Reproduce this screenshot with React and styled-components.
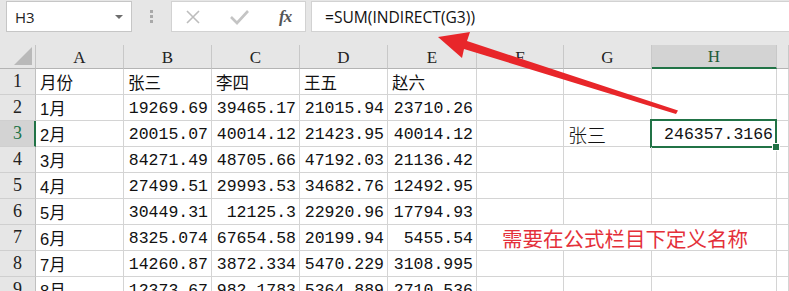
import React from 'react'
import styled, { createGlobalStyle } from 'styled-components';

const GlobalStyle = createGlobalStyle`
  html, body {
    margin: 0;
    padding: 0;
    background: #ffffff;
  }
  body {
    width: 789px;
    height: 291px;
    overflow: hidden;
    font-family: "Noto Sans CJK SC", sans-serif;
  }
`;

const Page = styled.div`
  position: relative;
  width: 789px;
  height: 291px;
  overflow: hidden;
  background: #e6e6e6;
`;

const FormulaBar = styled.div`
  display: flex;
  align-items: stretch;
  height: 31px;
  padding: 1px 0 13px 6px;
`;

const NameBox = styled.div`
  box-sizing: border-box;
  width: 126px;
  display: flex;
  align-items: center;
  justify-content: space-between;
  padding: 0 8px 0 8px;
  background: #fff;
  border: 1px solid #c6c6c6;
  font-family: "Open Sans", "Liberation Sans", sans-serif;
  font-size: 15px;
  color: #222;
`;

const Caret = styled.span`
  width: 0;
  height: 0;
  border-left: 4px solid transparent;
  border-right: 4px solid transparent;
  border-top: 4px solid #6d6d6d;
`;

const Grip = styled.div`
  width: 39px;
  display: flex;
  flex-direction: column;
  align-items: center;
  justify-content: center;
  gap: 2px;
  span {
    width: 3px;
    height: 3px;
    background: #a9a9a9;
  }
`;

const ButtonBox = styled.div`
  box-sizing: border-box;
  width: 135px;
  display: flex;
  align-items: center;
  background: #fff;
  border: 1px solid #d2d2d2;
  padding: 0 0 0 12px;
  gap: 26px;
  svg { display: block; }
`;

const Fx = styled.span`
  font-family: "Liberation Serif", serif;
  font-style: italic;
  font-weight: bold;
  font-size: 17px;
  color: #555;
  margin-left: 3px;
  letter-spacing: -1px;
`;

const FormulaInput = styled.div`
  flex: 1;
  margin-left: 5px;
  display: flex;
  align-items: center;
  padding-left: 13px;
  background: #fff;
  border: 1px solid #d2d2d2;
  border-right: none;
  font-family: "Open Sans", "Liberation Sans", sans-serif;
  font-size: 15.6px;
  color: #111;
`;

const Sheet = styled.div`
  display: grid;
  grid-template-columns: 36px 88px 88px 88px 88px 89px 87px 88px 125px 1fr;
  grid-template-rows: 24px repeat(9, 26px);
  background: #fff;
`;

const Corner = styled.div`
  box-sizing: border-box;
  background: #e6e6e6;
  border-right: 1px solid #c4c4c4;
  border-bottom: 1px solid #b4b4b4;
  display: flex;
  align-items: flex-end;
  justify-content: flex-end;
  padding: 0 3px 3px 0;
  &::before {
    content: "";
    width: 0;
    height: 0;
    border-left: 18px solid transparent;
    border-bottom: 18px solid #b9b9b9;
  }
`;

const ColHead = styled.div`
  box-sizing: border-box;
  display: flex;
  align-items: center;
  justify-content: center;
  background: ${({ $active }) => ($active ? '#d3d3d3' : '#e6e6e6')};
  border-right: 1px solid #c8c8c8;
  border-bottom: ${({ $active }) => ($active ? '2px solid #217346' : '1px solid #b4b4b4')};
  font-family: "Liberation Serif", serif;
  font-size: 17px;
  color: ${({ $active }) => ($active ? '#1e5c38' : '#222')};
  padding-top: 2px;
`;

const RowHead = styled.div`
  box-sizing: border-box;
  display: flex;
  align-items: center;
  justify-content: center;
  background: ${({ $active }) => ($active ? '#d3d3d3' : '#e6e6e6')};
  border-right: ${({ $active }) => ($active ? '2px solid #217346' : '1px solid #c0c0c0')};
  border-bottom: 1px solid #cfcfcf;
  font-family: "Liberation Serif", serif;
  font-size: 18px;
  color: ${({ $active }) => ($active ? '#217346' : '#222')};
  padding-left: ${({ $active }) => ($active ? '1px' : '0')};
`;

const Cell = styled.div`
  position: relative;
  box-sizing: border-box;
  display: flex;
  align-items: center;
  justify-content: ${({ $num }) => ($num ? 'flex-end' : 'flex-start')};
  padding: 1px 3px 0 4px;
  border-right: 1px solid #d4d4d4;
  border-bottom: 1px solid #d4d4d4;
  font-family: ${({ $num }) => ($num ? '"Liberation Mono", monospace' : '"Liberation Sans", "Noto Sans CJK SC", sans-serif')};
  font-size: ${({ $num, $big }) => ($num ? '16.5px' : $big ? '19px' : '16.5px')};
  font-weight: ${({ $big }) => ($big ? 300 : 400)};
  color: #111;
  white-space: nowrap;
  ${({ $selected }) => $selected && `
    &::after {
      content: "";
      position: absolute;
      left: -2px;
      top: -2px;
      right: -1px;
      bottom: -2px;
      border: 2px solid #217346;
    }
    &::before {
      content: "";
      position: absolute;
      right: -4px;
      bottom: -5px;
      width: 6px;
      height: 6px;
      background: #217346;
      border: 1px solid #fff;
      z-index: 2;
    }
  `}
`;

const Note = styled.div`
  grid-column: span 3;
  box-sizing: border-box;
  display: flex;
  align-items: center;
  padding: 0 0 0 25px;
  border-bottom: 1px solid #d4d4d4;
  border-right: 1px solid #d4d4d4;
  font-family: "Noto Sans CJK SC", sans-serif;
  font-size: 20.5px;
  color: #e4303a;
  white-space: nowrap;
`;

const Arrow = styled.svg`
  position: absolute;
  left: 0;
  top: 0;
  pointer-events: none;
`;

const cols = ['A', 'B', 'C', 'D', 'E', 'F', 'G', 'H', 'I'];

const rows = [
  ['月份', '张三', '李四', '王五', '赵六'],
  ['1月', '19269.69', '39465.17', '21015.94', '23710.26'],
  ['2月', '20015.07', '40014.12', '21423.95', '40014.12', '', '张三', '246357.3166'],
  ['3月', '84271.49', '48705.66', '47192.03', '21136.42'],
  ['4月', '27499.51', '29993.53', '34682.76', '12492.95'],
  ['5月', '30449.31', '12125.3', '22920.96', '17794.93'],
  ['6月', '8325.074', '67654.58', '20199.94', '5455.54'],
  ['7月', '14260.87', '3872.334', '5470.229', '3108.995'],
  ['8月', '12373.67', '982.1783', '5364.889', '2710.536'],
];

const isNum = (v) => /^[0-9.]+$/.test(v);

const renderRow = (row, r) => {
  const cells = [];
  cells.push(<RowHead key="h" $active={r === 2}>{r + 1}</RowHead>);
  for (let c = 0; c < cols.length; c++) {
    if (r === 6 && c === 5) {
      cells.push(<Note key="note">需要在公式栏目下定义名称</Note>);
      c += 2;
      continue;
    }
    const v = row[c] || '';
    cells.push(
      <Cell key={c} $num={isNum(v)} $big={r === 2 && c === 6} $selected={r === 2 && c === 7}>{v}</Cell>
    );
  }
  return cells;
};

const App = () => {
  return (
    <Page>
      <GlobalStyle />
      <FormulaBar>
        <NameBox>
          H3
          <Caret />
        </NameBox>
        <Grip><span /><span /><span /></Grip>
        <ButtonBox>
          <svg width="18" height="18" viewBox="0 0 18 18">
            <path d="M3 3 L15 15 M15 3 L3 15" stroke="#bdbdbd" strokeWidth="1.6" fill="none" />
          </svg>
          <svg width="22" height="18" viewBox="0 0 22 18">
            <path d="M3 9 L9 15 L20 3" stroke="#c4c4c4" strokeWidth="2.6" fill="none" />
          </svg>
          <Fx>fx</Fx>
        </ButtonBox>
        <FormulaInput>=SUM(INDIRECT(G3))</FormulaInput>
      </FormulaBar>
      <Sheet>
        <Corner />
        {cols.map((c) => (
          <ColHead key={c} $active={c === 'H'}>{c === 'I' ? '' : c}</ColHead>
        ))}
        {rows.map((row, r) => renderRow(row, r))}
      </Sheet>
      <Arrow width="789" height="291" viewBox="0 0 789 291">
        <polygon
          points="438,37 470,32 467,41 678,110.5 676,114 464,49 462,58"
          fill="#e8262a"
        />
      </Arrow>
    </Page>
  );
};

export default App;
